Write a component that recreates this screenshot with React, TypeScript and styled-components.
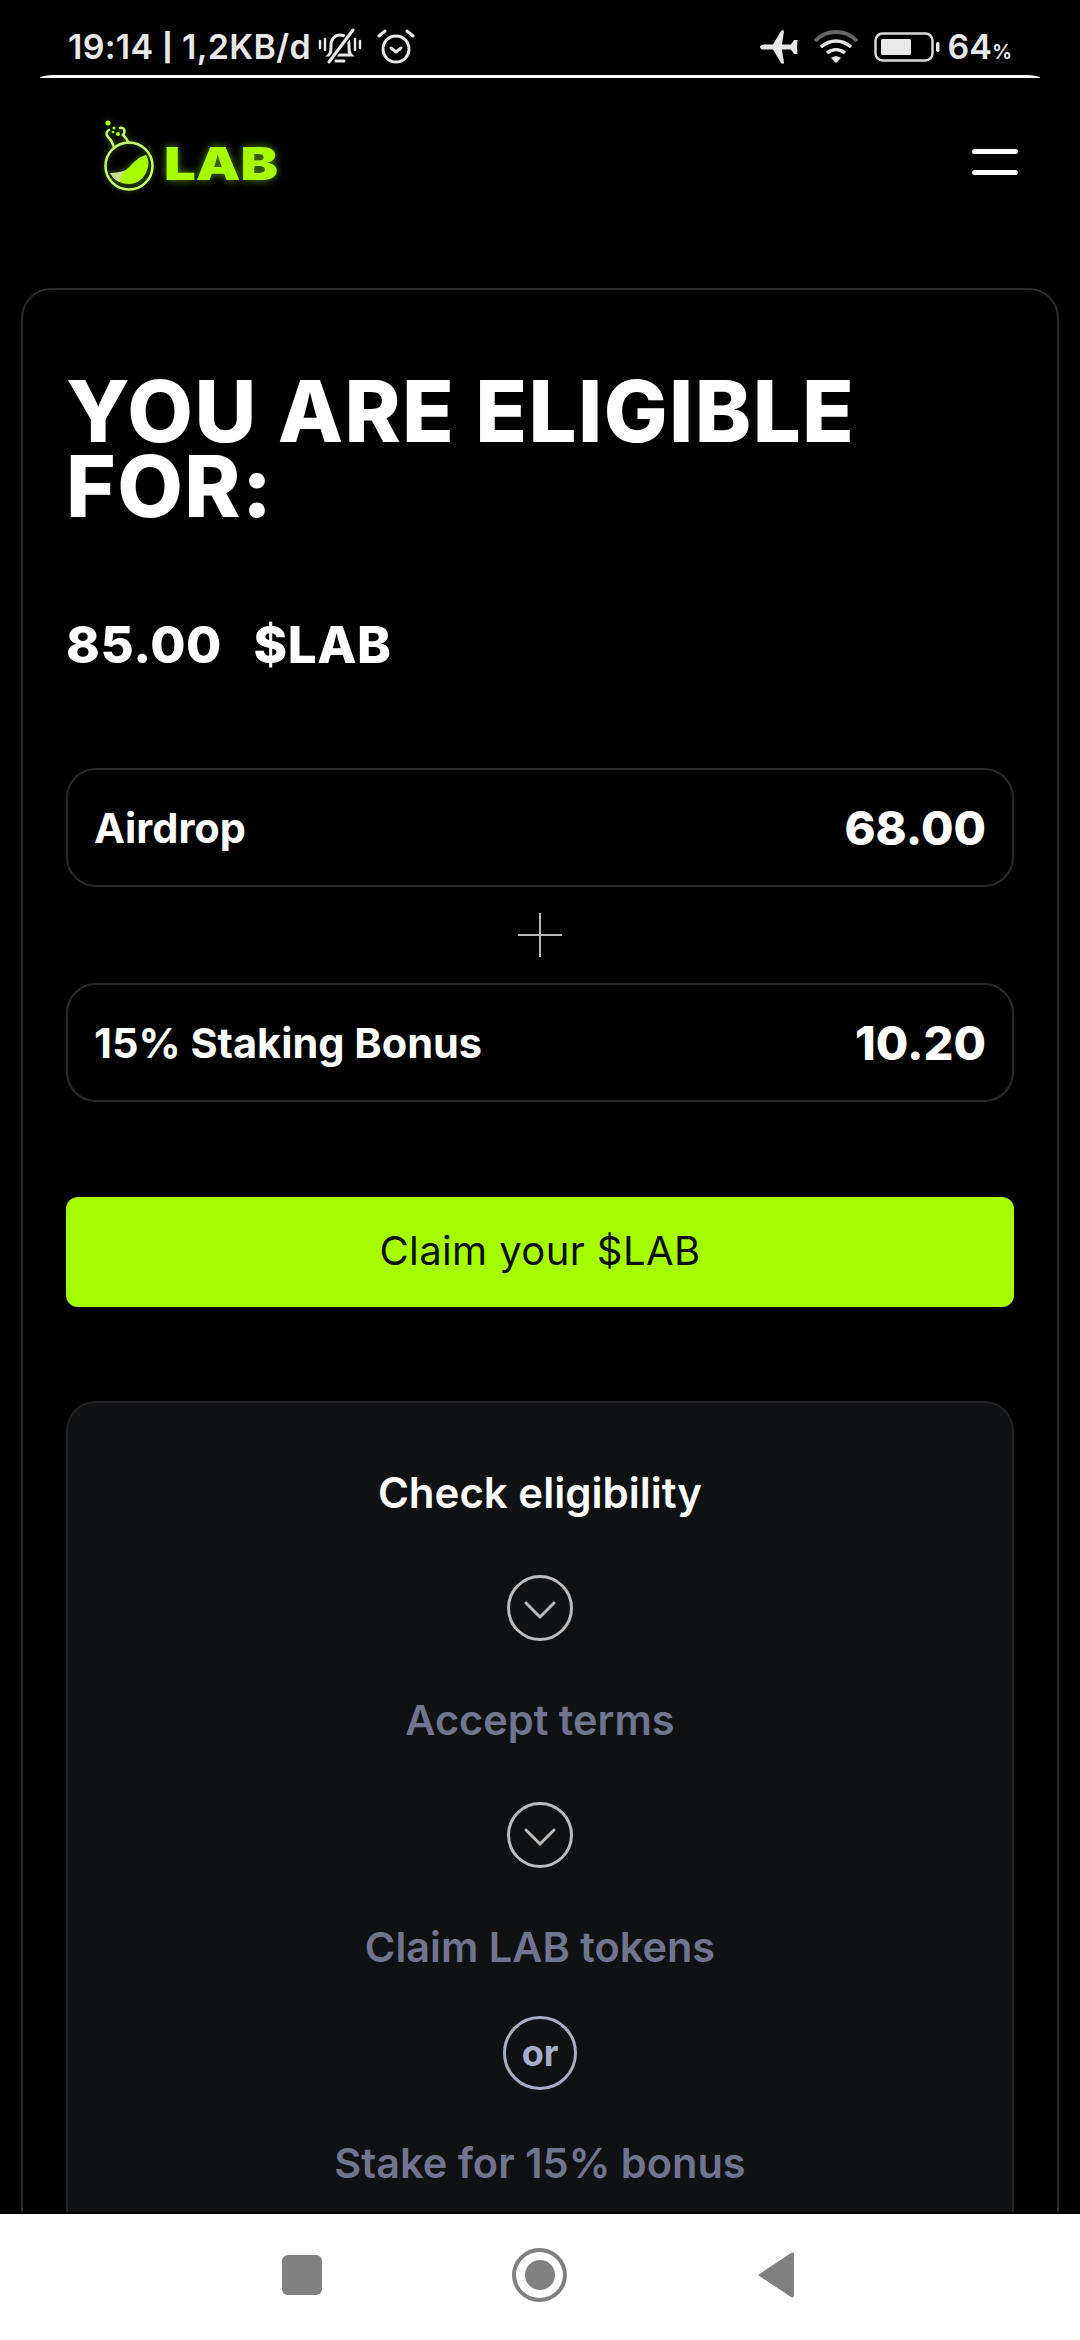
import React from 'react';
import styled, { createGlobalStyle } from 'styled-components';

const GlobalStyle = createGlobalStyle`
  html, body {
    margin: 0;
    padding: 0;
    background: #000;
  }
  * {
    box-sizing: border-box;
  }
`;

const Screen = styled.div`
  width: 1080px;
  height: 2340px;
  display: flex;
  flex-direction: column;
  background: #000;
  color: #fff;
  font-family: Inter, "Noto Sans", sans-serif;
  overflow: hidden;
`;

// Phone status bar
const StatusBar = styled.div`
  height: 75px;
  flex: none;
  display: flex;
  align-items: center;
  justify-content: space-between;
  padding: 18px 68px 0 68px;
  color: #e8e8e8;
`;

const StatusGroup = styled.div`
  display: flex;
  align-items: center;
`;

const StatusText = styled.span`
  font-size: 34px;
  font-weight: 600;
  letter-spacing: 0.3px;
  margin-right: 7px;
`;

const StatusPipe = styled.span`
  font-size: 27px;
  font-weight: 800;
  vertical-align: 2px;
`;

const Battery = styled.span`
  font-size: 34px;
  font-weight: 600;
  margin-left: 8px;
  small {
    font-size: 20px;
  }
`;

const StatusGap = styled.span<{ $w: number }>`
  width: ${(p) => p.$w}px;
`;

const StatusLine = styled.div`
  flex: none;
  height: 3px;
  margin: 0 40px;
  background: #fff;
  border-radius: 14px 14px 0 0 / 3px 3px 0 0;
`;

// Site header
const Header = styled.header`
  flex: none;
  height: 210px;
  display: flex;
  align-items: flex-start;
  justify-content: space-between;
  padding: 42px 62px 0 100px;
`;

const Logo = styled.div`
  display: flex;
  align-items: flex-end;
  gap: 8px;
`;

const LogoText = styled.span`
  display: inline-block;
  font-size: 45px;
  line-height: 45px;
  margin-bottom: 6px;
  font-weight: 900;
  color: #a6ff00;
  text-shadow: 0 0 8px rgba(166, 255, 0, 0.55);
  transform: scaleX(1.25);
  transform-origin: left center;
`;

const Burger = styled.button`
  display: flex;
  flex-direction: column;
  gap: 16px;
  padding: 0;
  margin-top: 29px;
  border: none;
  background: none;
`;

const BurgerBar = styled.span`
  display: block;
  width: 46px;
  height: 5px;
  border-radius: 3px;
  background: #fff;
`;

const Main = styled.main`
  flex: 1;
  min-height: 0;
  overflow: hidden;
  padding: 0 21px;
`;

const Card = styled.section`
  border: 2px solid #2a2a2c;
  border-radius: 30px;
  padding: 84px 43px 60px;
`;

const Title = styled.h1`
  margin: 0;
  font-size: 85px;
  line-height: 75px;
  font-weight: 800;
  letter-spacing: 1.4px;
  color: #fff;
`;

const Total = styled.div`
  margin-top: 91px;
  font-size: 51px;
  line-height: 60px;
  font-weight: 800;
  letter-spacing: 0.6px;
  word-spacing: 4px;
  white-space: pre;
`;

const Rows = styled.div`
  margin-top: 93px;
  display: flex;
  flex-direction: column;
  align-items: center;
`;

const AmountRow = styled.div`
  width: 100%;
  height: 119px;
  display: flex;
  align-items: center;
  justify-content: space-between;
  padding: 0 26px;
  border: 2px solid #2a2a2c;
  border-radius: 30px;
`;

const RowLabel = styled.span`
  font-size: 41.5px;
  font-weight: 700;
`;

const RowValue = styled.span`
  font-size: 47px;
  font-weight: 800;
`;

const PlusMark = styled.svg`
  display: block;
  width: 46px;
  height: 46px;
  margin: 25px 0 25px;
`;

const ClaimButton = styled.button`
  display: block;
  width: 100%;
  height: 110px;
  margin-top: 95px;
  padding-bottom: 4px;
  border: none;
  border-radius: 12px;
  background: #a6ff00;
  color: #0a0f00;
  font-family: inherit;
  font-size: 40px;
  letter-spacing: 0.4px;
  font-weight: 400;
`;

const Steps = styled.div`
  margin-top: 94px;
  padding: 66px 20px 100px;
  display: flex;
  flex-direction: column;
  align-items: center;
  background: #101113;
  border: 2px solid #222325;
  border-radius: 30px;
`;

const StepsTitle = styled.div`
  font-size: 42px;
  line-height: 48px;
  font-weight: 600;
`;

const StepLabel = styled.div`
  font-size: 41.5px;
  line-height: 48px;
  font-weight: 600;
  color: #70758f;
`;

const StepIcon = styled.svg`
  display: block;
  width: 66px;
  height: 66px;
  margin: 58px 0 55px;
`;

const OrBadge = styled.div`
  width: 74px;
  height: 74px;
  margin: 45px 0 49px;
  display: flex;
  align-items: center;
  justify-content: center;
  border: 3px solid #a7aec4;
  border-radius: 50%;
  color: #a3aeca;
  font-size: 36px;
  font-weight: 700;
`;

// Android navigation bar
const NavBar = styled.nav`
  flex: none;
  height: 128px;
  display: flex;
  align-items: center;
  justify-content: space-between;
  padding: 0 285px 4px 282px;
  background: #fff;
  border-top: 2px solid #000;
`;

const NavSquare = styled.span`
  display: block;
  width: 40px;
  height: 40px;
  border-radius: 6px;
  background: #808080;
`;

const NavHome = styled.span`
  display: flex;
  align-items: center;
  justify-content: center;
  width: 55px;
  height: 54px;
  border: 4px solid #808080;
  border-radius: 50%;
  &::after {
    content: '';
    width: 30px;
    height: 30px;
    border-radius: 50%;
    background: #808080;
  }
`;

const NavBack = styled.svg`
  display: block;
  width: 38px;
  height: 46px;
`;

const MutedBell = () => (
  <svg width="44" height="38" viewBox="0 0 44 38" fill="none" stroke="#e8e8e8" strokeWidth="3" strokeLinecap="round">
    <path d="M11 27c2-2 2-4 2-10 0-6 4-10 9-10s9 4 9 10c0 6 0 8 2 10z" />
    <path d="M18 33h8" />
    <path d="M2 13v7M7 11v11M37 11v11M42 13v7" strokeWidth="2.5" />
    <path d="M35 2L11 34" stroke="#000" strokeWidth="6" />
    <path d="M35 2L11 34" />
  </svg>
);

const AlarmClock = () => (
  <svg width="38" height="38" viewBox="0 0 38 38" fill="none" stroke="#e8e8e8" strokeWidth="3" strokeLinecap="round" strokeLinejoin="round">
    <circle cx="19" cy="21" r="13" />
    <path d="M14 20l5 4 5-4" />
    <path d="M2 8l6-5M36 8l-6-5" />
  </svg>
);

const Airplane = () => (
  <svg width="40" height="34" viewBox="0 0 40 34" fill="#e8e8e8">
    <path d="M1 17c0-1.6 2-2.6 4-2.6h9L22 1c.6-1 3-1 3 0l-2 13.400h9l3-4.400h3.500l-.5 7 .5 7H35l-3-4.400h-9l2 13.400c0 1-2.400 1-3 0l-8-13.400H5c-2 0-4-1-4-2.600z" />
  </svg>
);

const Wifi = () => (
  <svg width="46" height="34" viewBox="0 0 46 34" fill="none" strokeLinecap="butt">
    <path d="M2 11C13-1 33-1 44 11" stroke="#666" strokeWidth="4" />
    <path d="M8 17c9-8 21-8 30 0" stroke="#e8e8e8" strokeWidth="3.500" />
    <path d="M14 23c5.500-4.500 12.500-4.500 18 0" stroke="#e8e8e8" strokeWidth="3.500" />
    <path d="M18 28c3-2.400 7-2.400 10 0l-5 5z" fill="#e8e8e8" />
  </svg>
);

const BatteryIcon = () => (
  <svg width="66" height="30" viewBox="0 0 66 30" fill="none">
    <rect x="1.500" y="1.500" width="57" height="27" rx="7" stroke="#d8d8d8" strokeWidth="2.500" />
    <rect x="7" y="7" width="30" height="16" rx="1.500" fill="#e8e8e8" />
    <rect x="62" y="10" width="3.500" height="10" rx="1.700" fill="#e8e8e8" />
  </svg>
);

const FlaskSvg = styled.svg`
  filter: drop-shadow(0 0 3px rgba(166, 255, 0, 0.4));
`;

const FlaskLogo = () => (
  <FlaskSvg width="56" height="72" viewBox="0 0 56 72" fill="none">
    <circle cx="29" cy="46" r="23.500" stroke="#c6ff66" strokeWidth="2.500" />
    <path d="M14 28C13 23 12 21 8 17c-3-3-1-6 1-7" stroke="#c6ff66" strokeWidth="2.500" strokeLinecap="round" />
    <path d="M28 22c-1-3-3-5-5-7 3-4 1-8-3-7" stroke="#c6ff66" strokeWidth="2.500" strokeLinecap="round" />
    <circle cx="8" cy="3" r="2.500" fill="#a6ff00" />
    <circle cx="14" cy="8" r="1.500" fill="#a6ff00" />
    <circle cx="18" cy="14" r="2" fill="#a6ff00" />
    <circle cx="13" cy="12" r="1.300" fill="#a6ff00" />
    <path d="M12 56c9-2 14-5 20-12 5-5 9-8 14-9 3 5 3 10 1 15-3 9-10 14-18 14-7 0-13-3-17-8z" fill="#a6ff00" />
    <path d="M10 53c6 0 12-1 16-3-4 4-6 8-7 12-4-2-7-5-9-9z" fill="#c9dd9e" />
  </FlaskSvg>
);

const ChevronCircle = () => (
  <StepIcon viewBox="0 0 66 66" fill="none" stroke="#bcbcbc" strokeWidth="3" strokeLinecap="round" strokeLinejoin="round">
    <circle cx="33" cy="33" r="31.500" />
    <path d="M19 28l14 14 14-14" />
  </StepIcon>
);

const App: React.FC = () => {
  return (
    <Screen>
      <GlobalStyle />
      <StatusBar>
        <StatusGroup>
          <StatusText>
            19:14 <StatusPipe>|</StatusPipe> 1,2KB/d
          </StatusText>
          <MutedBell />
          <StatusGap $w={15} />
          <AlarmClock />
        </StatusGroup>
        <StatusGroup>
          <Airplane />
          <StatusGap $w={14} />
          <Wifi />
          <StatusGap $w={15} />
          <BatteryIcon />
          <Battery>
            64<small>%</small>
          </Battery>
        </StatusGroup>
      </StatusBar>
      <StatusLine />

      <Header>
        <Logo>
          <FlaskLogo />
          <LogoText>LAB</LogoText>
        </Logo>
        <Burger aria-label="Menu">
          <BurgerBar />
          <BurgerBar />
        </Burger>
      </Header>

      <Main>
        <Card>
          <Title>YOU ARE ELIGIBLE FOR:</Title>
          <Total>85.00  $LAB</Total>

          <Rows>
            <AmountRow>
              <RowLabel>Airdrop</RowLabel>
              <RowValue>68.00</RowValue>
            </AmountRow>
            <PlusMark viewBox="0 0 46 46" stroke="#b8b8b8" strokeWidth="2">
              <path d="M23 1v44M1 23h44" />
            </PlusMark>
            <AmountRow>
              <RowLabel>15% Staking Bonus</RowLabel>
              <RowValue>10.20</RowValue>
            </AmountRow>
          </Rows>

          <ClaimButton>Claim your $LAB</ClaimButton>

          <Steps>
            <StepsTitle>Check eligibility</StepsTitle>
            <ChevronCircle />
            <StepLabel>Accept terms</StepLabel>
            <ChevronCircle />
            <StepLabel>Claim LAB tokens</StepLabel>
            <OrBadge>or</OrBadge>
            <StepLabel>Stake for 15% bonus</StepLabel>
          </Steps>
        </Card>
      </Main>

      <NavBar>
        <NavSquare />
        <NavHome />
        <NavBack viewBox="0 0 38 46" fill="#808080">
          <path d="M1 23L34 1c2-1 3 0 3 2v40c0 2-1 3-3 2z" />
        </NavBack>
      </NavBar>
    </Screen>
  );
};

export default App;
